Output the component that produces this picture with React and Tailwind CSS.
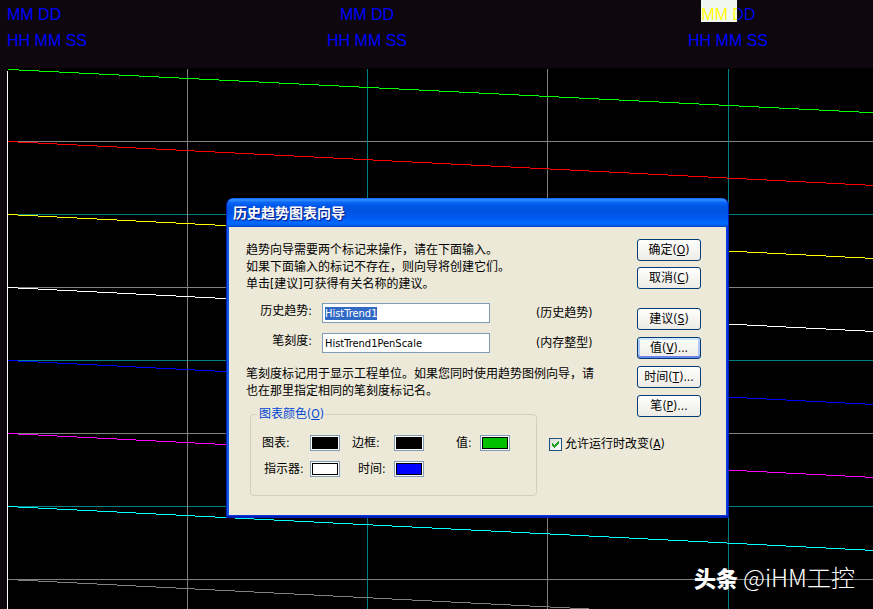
import React, { useEffect, useRef, useState } from "react";

const pens = [
  { color: "#00ff00", y: 1, first: 12, step: 20 },
  { color: "#ff0000", y: 73, first: 11, step: 19.7 },
  { color: "#ffff00", y: 146, first: 11, step: 19.7 },
  { color: "#ffffff", y: 219, first: 11, step: 19.7 },
  { color: "#0000ff", y: 292, first: 11, step: 19.7 },
  { color: "#ff00ff", y: 365, first: 11, step: 19.7 },
  { color: "#00ffff", y: 438, first: 11, step: 19.7 },
  { color: "#808080", y: 511, first: 11, step: 19.7 },
];

// one pixel down after every step, like an aliased GDI line
const penPath = ({ y, first, step }) => {
  let d = `M1 ${y + 0.5}`;
  for (let i = 0; i < 100; i++) {
    const x = Math.round(first + i * step);
    d += `H${x}M${x} ${y + i + 1.5}`;
  }
  return d;
};

const TrendChart = () => (
  <svg className="w-full flex-1 bg-black" shapeRendering="crispEdges" aria-label="Trend">
    {[73, 146, 219, 292, 365, 438, 511].map((y, i) => (
      <rect key={y} x="0" y={y} width="100%" height="1" fill={i % 2 ? "#008080" : "#808080"} />
    ))}
    {[180, 360, 540, 721].map((x, i) => (
      <rect key={x} x={x} y="1" width="1" height="100%" fill={i % 2 ? "#008080" : "#808080"} />
    ))}
    {pens.map((pen) => (
      <path key={pen.color} d={penPath(pen)} stroke={pen.color} fill="none" />
    ))}
    <rect x="0" y="3" width="1" height="100%" fill="#ffffff" />
  </svg>
);

const DialogButton = ({ label, hotkey, more, focused }) => (
  <button
    type="button"
    className={`h-[22px] w-16 rounded-[3px] border border-[#003c74] bg-linear-to-b from-white to-[#ecebe5] text-center leading-5 ${
      focused ? "shadow-[inset_0_2px_0_#cee7ff,inset_0_-2px_0_#6982ee,inset_2px_0_0_#b0c8f5,inset_-2px_0_0_#b0c8f5]" : ""
    }`}
  >
    {label}(<u>{hotkey}</u>){more && "..."}
  </button>
);

const ColorField = ({ id, label, color, className }) => (
  <div className="flex items-center">
    <label htmlFor={id} className={className}>
      {label}:
    </label>
    <button
      type="button"
      id={id}
      className="h-4 w-[30px] border border-[#7f9db9] bg-white p-px"
    >
      <span className="block h-full border border-black" style={{ backgroundColor: color }} />
    </button>
  </div>
);

const TagField = ({ id, label, hint, value, onChange, inputRef }) => (
  <div className="flex items-start">
    <label htmlFor={id} className="w-[66px] text-right leading-4">
      {label}:
    </label>
    <input
      ref={inputRef}
      id={id}
      type="text"
      value={value}
      onChange={onChange}
      className="ml-[10px] h-5 w-[168px] border border-[#7f9db9] bg-white px-[2px] font-['DejaVu_Sans_Condensed','Liberation_Sans',sans-serif] text-[11px] outline-none selection:bg-[#316ac5] selection:text-white"
    />
    <span className="ml-[46px] self-center leading-4">({hint})</span>
  </div>
);

const WizardDialog = () => {
  const [trend, setTrend] = useState("HistTrend1");
  const [penScale, setPenScale] = useState("HistTrend1PenScale");
  const [allowChange, setAllowChange] = useState(true);
  const trendRef = useRef(null);

  useEffect(() => {
    trendRef.current.focus();
    trendRef.current.select();
  }, []);

  return (
    <div
      role="dialog"
      aria-labelledby="wizard-title"
      className="absolute top-[198px] left-[226px] w-[503px] rounded-t-[7px] bg-[#001db8] px-px pb-[2px] font-['DejaVu_Sans_Condensed','Noto_Sans_CJK_SC',sans-serif] text-[12px] text-black"
    >
      <div className="flex h-[29px] items-center rounded-t-[7px] bg-[linear-gradient(to_bottom,#0058e6_0%,#3a93ff_6%,#0a6afb_14%,#0055e5_28%,#0054e3_50%,#005bf5_70%,#026afe_86%,#0062f0_93%,#0040ba_100%)] px-[6px] pt-[2px]">
        <h1
          id="wizard-title"
          className="text-[14px] font-bold text-white [text-shadow:1px_1px_1px_#0a1883]"
        >
          历史趋势图表向导
        </h1>
      </div>

      <div className="border-x-2 border-b border-l-[#0f5bea] border-r-[#0838d9] border-b-[#0838d9] bg-[#ece9d8] pt-3 pr-[25px] pb-[19px] pl-[17px]">
        <div className="flex justify-between">
          <div>
            <p className="pt-[3px] leading-[17px]">
              趋势向导需要两个标记来操作，请在下面输入。
              <br />
              如果下面输入的标记不存在，则向导将创建它们。
              <br />
              单击[建议]可获得有关名称的建议。
            </p>

            {/* Tags */}
            <div className="mt-[10px] flex flex-col gap-[10px]">
              <TagField
                id="trend"
                label="历史趋势"
                hint="历史趋势"
                value={trend}
                onChange={(e) => setTrend(e.target.value)}
                inputRef={trendRef}
              />
              <TagField
                id="penScale"
                label="笔刻度"
                hint="内存整型"
                value={penScale}
                onChange={(e) => setPenScale(e.target.value)}
              />
            </div>

            <p className="mt-[13px] leading-[17px]">
              笔刻度标记用于显示工程单位。如果您同时使用趋势图例向导，请
              <br />
              也在那里指定相同的笔刻度标记名。
            </p>
          </div>

          {/* Buttons */}
          <div className="flex flex-col">
            <div className="flex flex-col gap-[6px]">
              <DialogButton label="确定" hotkey="O" />
              <DialogButton label="取消" hotkey="C" />
            </div>
            <div className="mt-[19px] flex flex-col gap-[7px]">
              <DialogButton label="建议" hotkey="S" />
              <DialogButton label="值" hotkey="V" more focused />
              <DialogButton label="时间" hotkey="T" more />
              <DialogButton label="笔" hotkey="P" more />
            </div>
          </div>
        </div>

        {/* Colors */}
        <div className="-mt-[11px] flex items-start pl-1">
          <fieldset className="h-[90px] w-[287px] rounded-[4px] border border-[#d0d0bf] px-[6px]">
            <legend className="px-[2px] leading-4 text-[#0046d5]">
              图表颜色(<u>O</u>)
            </legend>
            <div className="mt-[13px] flex flex-col gap-[10px] pl-[5px]">
              <div className="flex">
                <ColorField id="chart" label="图表" color="#000000" className="w-12 leading-4" />
                <ColorField id="border" label="边框" color="#000000" className="ml-3 w-[42px] leading-4" />
                <ColorField id="value" label="值" color="#00c000" className="ml-8 w-6 leading-4" />
              </div>
              <div className="flex">
                <ColorField id="indicator" label="指示器" color="#ffffff" className="w-12 pl-[2px] leading-4" />
                <ColorField id="time" label="时间" color="#0000ff" className="ml-[18px] w-9 leading-4" />
              </div>
            </div>
          </fieldset>
          <label className="mt-[30px] ml-3 flex items-center gap-[3px] leading-4">
            <span className="grid">
              <input
                type="checkbox"
                checked={allowChange}
                onChange={(e) => setAllowChange(e.target.checked)}
                className="col-start-1 row-start-1 h-[13px] w-[13px] appearance-none border border-[#1c5180] bg-linear-to-br from-[#dcdcd7] to-white"
              />
              {allowChange && (
                <svg
                  viewBox="0 0 13 13"
                  className="pointer-events-none col-start-1 row-start-1 h-[13px] w-[13px]"
                  fill="#21a121"
                  shapeRendering="crispEdges"
                >
                  <path d="M3 5h1v1h1v1h1v-1h1v-1h1v-1h1v-1h1v3h-1v1h-1v1h-1v1h-1v1h-1v-1h-1v-1h-1z" />
                </svg>
              )}
            </span>
            <span>
              允许运行时改变(<u>A</u>)
            </span>
          </label>
        </div>
      </div>
    </div>
  );
};

const App = () => {
  return (
    <div className="relative flex min-h-screen flex-col overflow-hidden bg-[#0e070d]">
      <header className="grid h-[68px] grid-cols-[144px_432px_1fr] pl-[7px] font-['Liberation_Sans',sans-serif] text-[16px] text-[#0000ff]">
        <div>
          <p className="mb-1 h-[22px] leading-[29px]">MM DD</p>
          <p className="h-[22px] leading-[29px]">HH MM SS</p>
        </div>
        <div className="flex flex-col items-center">
          <p className="mb-1 h-[22px] leading-[29px]">MM DD</p>
          <p className="h-[22px] leading-[29px]">HH MM SS</p>
        </div>
        <div className="flex flex-col items-center">
          <p className="mb-1 h-[22px] bg-[linear-gradient(to_right,#eff7f0_36px,transparent_36px)] leading-[29px]">
            <span className="bg-[linear-gradient(to_right,#ffff00_36px,#0000ff_36px)] bg-clip-text text-transparent">
              MM DD
            </span>
          </p>
          <p className="h-[22px] leading-[29px]">HH MM SS</p>
        </div>
      </header>

      <main className="flex flex-1 flex-col pl-[7px]">
        <TrendChart />
      </main>

      <WizardDialog />

      <div className="absolute right-[18px] bottom-4 flex items-center gap-[5px] font-['Noto_Sans_CJK_SC',sans-serif] text-[22px] leading-8 text-white">
        <span className="font-black">头条</span>
        <span className="text-[24px] font-light">@iHM工控</span>
      </div>
    </div>
  );
};

export default App;
